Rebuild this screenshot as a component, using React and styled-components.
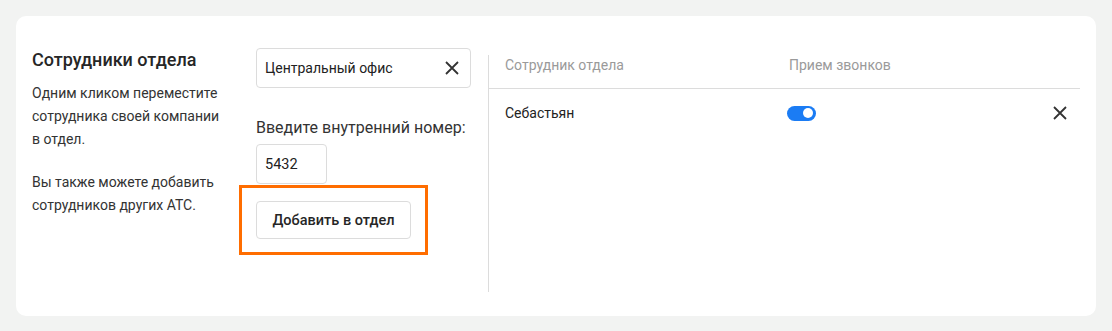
import React, { useState } from 'react';
import styled, { createGlobalStyle } from 'styled-components';

// Styles
const GlobalStyle = createGlobalStyle`
  html, body {
    margin: 0;
    padding: 0;
    background-color: #f2f3f2;
  }
  body {
    font-family: 'Roboto', 'Liberation Sans', sans-serif;
    color: #333;
  }
`;

const StyledPage = styled.div`
  padding: 16px;
  min-height: 299px;
`;

const StyledCard = styled.div`
  display: flex;
  align-items: flex-start;
  height: 300px;
  box-sizing: border-box;
  padding: 32px 16px 24px 16px;
  border-radius: 10px;
  background-color: #fff;
`;

const StyledIntro = styled.div`
  width: 192px;
  margin-right: 32px;
  flex-shrink: 0;
`;

const StyledTitle = styled.h2`
  margin: 0 0 10px 0;
  font-size: 18px;
  line-height: 24px;
  font-weight: 500;
  color: #262626;
`;

const StyledText = styled.p`
  margin: 0 0 ${props => (props.last ? 0 : '20px')} 0;
  font-size: 14px;
  line-height: 23px;
  color: #333;
`;

const StyledForm = styled.div`
  display: flex;
  flex-direction: column;
  width: 215px;
  margin-right: 17px;
  flex-shrink: 0;
`;

const StyledSelect = styled.div`
  display: flex;
  align-items: center;
  justify-content: space-between;
  height: 40px;
  box-sizing: border-box;
  padding: 0 8px 0 8px;
  border: 1px solid #dcdcdc;
  border-radius: 4px;
  font-size: 14px;
  color: #222;
`;

const StyledLabel = styled.label`
  margin: 30px 0 6px 0;
  font-size: 16px;
  line-height: 20px;
  color: #333;
  white-space: nowrap;
`;

const StyledInput = styled.input`
  width: 71px;
  height: 40px;
  box-sizing: border-box;
  padding: 0 8px;
  border: 1px solid #dcdcdc;
  border-radius: 4px;
  outline: none;
  font-family: inherit;
  font-size: 14.5px;
  color: #222;
`;

const StyledButtonWrap = styled.div`
  position: relative;
  align-self: flex-start;
  margin-top: 17px;
  &::after {
    content: '';
    position: absolute;
    top: -16px;
    left: -17px;
    right: -17px;
    bottom: -16px;
    border: 3px solid #ff6d00;
    pointer-events: none;
  }
`;

const StyledButton = styled.button`
  height: 38px;
  width: 155px;
  padding: 0;
  border: 1px solid #dcdcdc;
  border-radius: 4px;
  background-color: #fff;
  font-family: inherit;
  font-size: 14.5px;
  font-weight: 500;
  color: #262626;
  cursor: pointer;
`;

const StyledPanel = styled.div`
  flex: 1;
  align-self: stretch;
  margin-top: 7px;
  border-left: 1px solid #dcdcdc;
`;

const StyledRow = styled.div`
  display: flex;
  align-items: ${props => (props.header ? 'flex-start' : 'center')};
  height: ${props => (props.header ? '33px' : '48px')};
  padding: 0 10px 0 16px;
  border-bottom: ${props => (props.header ? '1px solid #dcdcdc' : 'none')};
  font-size: 14px;
  line-height: 20px;
  color: ${props => (props.header ? '#9a9a9a' : '#222')};
`;

const StyledNameCell = styled.div`
  width: 284px;
`;

const StyledCell = styled.div`
  flex: 1;
  display: flex;
  align-items: center;
`;

const StyledToggle = styled.button`
  position: relative;
  width: 29px;
  height: 15px;
  margin-left: -2px;
  padding: 0;
  border: none;
  border-radius: 8px;
  background-color: ${props => (props.on ? '#1b7cf4' : '#c8c8c8')};
  cursor: pointer;
  &::after {
    content: '';
    position: absolute;
    top: 2.5px;
    left: ${props => (props.on ? '16px' : '3px')};
    width: 10px;
    height: 10px;
    border-radius: 50%;
    background-color: #fff;
  }
`;

const StyledIconButton = styled.button`
  display: flex;
  align-items: center;
  justify-content: center;
  width: 20px;
  height: 20px;
  padding: 0;
  border: none;
  background: none;
  cursor: pointer;
`;

const CloseIcon = () => (
  <svg width="14" height="14" viewBox="0 0 14 14" fill="none">
    <path d="M1 1L13 13M13 1L1 13" stroke="#333" strokeWidth="1.8" />
  </svg>
);

function App() {
  const [number, setNumber] = useState('5432');
  const [receiving, setReceiving] = useState(true);
  return (
    <StyledPage>
      <GlobalStyle />
      <StyledCard>
        <StyledIntro>
          <StyledTitle>Сотрудники отдела</StyledTitle>
          <StyledText>
            Одним кликом переместите сотрудника своей компании в отдел.
          </StyledText>
          <StyledText last>
            Вы также можете добавить сотрудников других АТС.
          </StyledText>
        </StyledIntro>
        <StyledForm>
          <StyledSelect>
            <span>Центральный офис</span>
            <StyledIconButton>
              <CloseIcon />
            </StyledIconButton>
          </StyledSelect>
          <StyledLabel htmlFor="ext">Введите внутренний номер:</StyledLabel>
          <StyledInput
            id="ext"
            value={number}
            onChange={e => setNumber(e.target.value)}
          />
          <StyledButtonWrap>
            <StyledButton>Добавить в отдел</StyledButton>
          </StyledButtonWrap>
        </StyledForm>
        <StyledPanel>
          <StyledRow header>
            <StyledNameCell>Сотрудник отдела</StyledNameCell>
            <StyledCell>Прием звонков</StyledCell>
          </StyledRow>
          <StyledRow>
            <StyledNameCell>Себастьян</StyledNameCell>
            <StyledCell>
              <StyledToggle on={receiving} onClick={() => setReceiving(!receiving)} />
            </StyledCell>
            <StyledIconButton>
              <CloseIcon />
            </StyledIconButton>
          </StyledRow>
        </StyledPanel>
      </StyledCard>
    </StyledPage>
  );
}

export default App;
